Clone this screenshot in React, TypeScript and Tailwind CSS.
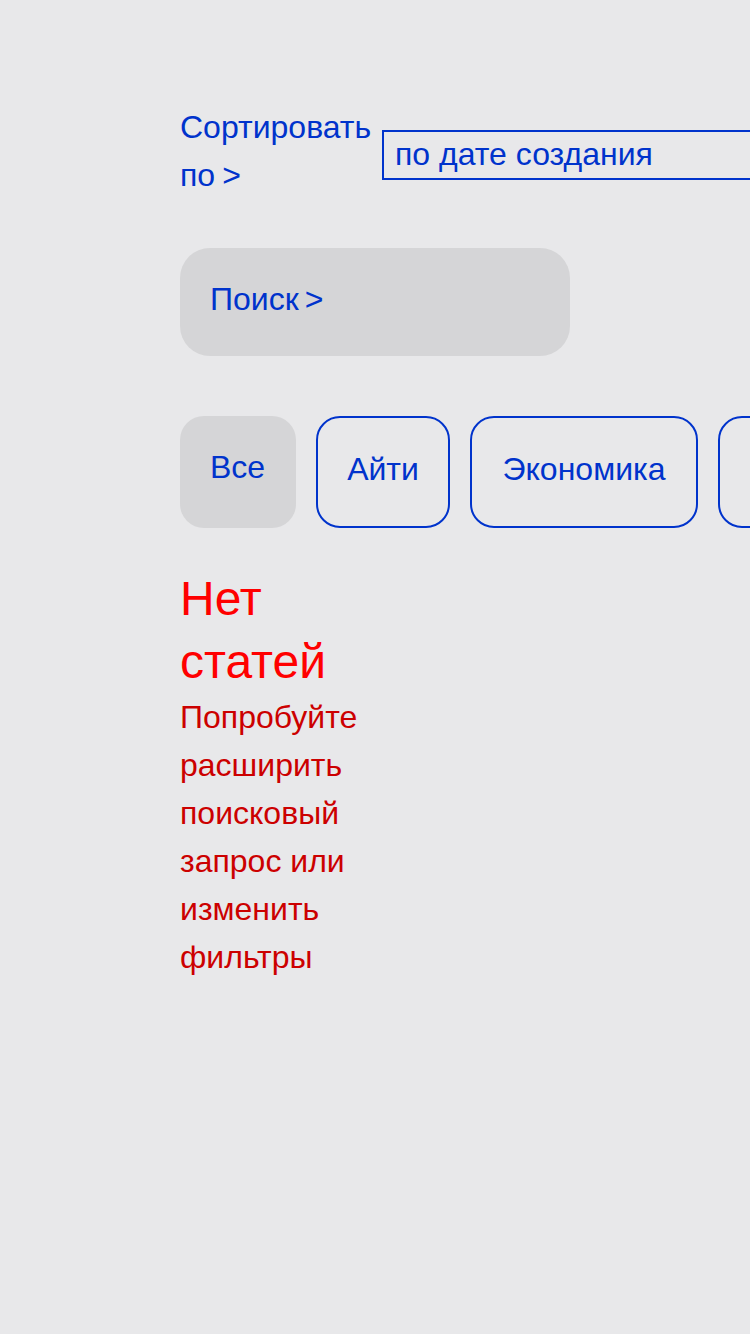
export default function App() {
  const chips = [
    { name: "Айти", w: "w-[134px]" },
    { name: "Экономика", w: "w-[228px]" },
    { name: "Наука", w: "w-[150px]" },
  ];
  return (
    <div className="min-h-[1334px] w-[750px] overflow-hidden bg-[#e8e8ea] font-['Liberation_Sans',Arial,sans-serif] text-[32px] leading-[48px]">
      <div className="w-[190px] ml-[180px] pt-[103px]">
        {/* сортировка */}
        <div className="flex items-start gap-[10px] w-[800px]">
          <div className="w-[192px] shrink-0 text-[#0033cc]">
            Сортировать по<span className="ml-[7px]">&gt;</span>
          </div>
          <div className="mt-[27px] w-[420px] h-[50px] border-2 border-[#0033cc] pl-[11px] pb-[3px] flex items-center text-[#0033cc] leading-normal whitespace-nowrap">
            по дате создания
          </div>
        </div>

        {/* поиск */}
        <div className="mt-[49px] w-[390px] h-[108px] rounded-[30px] bg-[#d5d5d7] pl-[30px] pt-[27px] text-[#0033cc]">
          Поиск<span className="ml-[6px]">&gt;</span>
        </div>

        {/* категории */}
        <div className="mt-[60px] flex gap-[20px] w-[800px]">
          <div className="w-[116px] h-[112px] rounded-[24px] bg-[#d5d5d7] pl-[30px] pt-[27px] text-[#0033cc] shrink-0">
            Все
          </div>
          {chips.map((c) => (
            <div
              key={c.name}
              className={`${c.w} h-[112px] rounded-[24px] border-2 border-[#0033cc] pt-[27px] text-center text-[#0033cc] shrink-0`}
            >
              {c.name}
            </div>
          ))}
        </div>

        {/* пусто */}
        <div className="mt-[39px] text-[48px] leading-[63px] text-[#ff0000]">Нет статей</div>
        <p className="text-[#cc0000]">Попробуйте расширить поисковый запрос или изменить фильтры</p>
      </div>
    </div>
  );
}
